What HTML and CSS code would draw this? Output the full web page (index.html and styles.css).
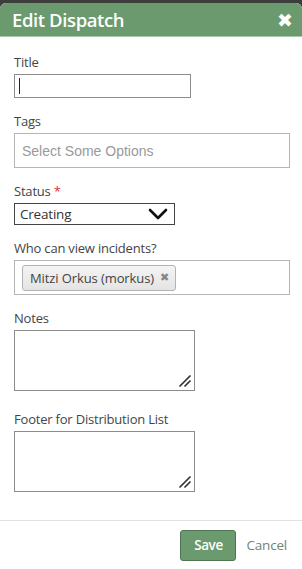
FILE: index.html
```html
<!DOCTYPE html>
<html lang="en">
  <head>
    <meta charset="UTF-8" />
    <meta name="viewport" content="width=device-width, initial-scale=1.0" />
    <title>Edit Dispatch</title>
    <link rel="stylesheet" href="styles.css">
  </head>
  <body>
    <div class="dialog">
      <header class="dialog-head">
        <span class="dialog-title">Edit Dispatch</span>
        <span class="close-btn">&#10006;</span>
      </header>
      <main class="dialog-body">
        <div class="field">
          <label>Title</label>
          <div class="text-input title-input"><span class="caret"></span></div>
        </div>

        <div class="field">
          <label>Tags</label>
          <div class="multi-box tags-box">
            <span class="placeholder">Select Some Options</span>
          </div>
        </div>

        <div class="field">
          <label>Status <span class="req">*</span></label>
          <div class="select-box">
            <span>Creating</span>
            <svg class="chevron" width="20" height="12" viewBox="0 0 20 12">
              <path d="M2 2 L10 10 L18 2" fill="none" stroke="#111" stroke-width="2.6" stroke-linecap="round" stroke-linejoin="round"/>
            </svg>
          </div>
        </div>

        <div class="field">
          <label>Who can view incidents?</label>
          <div class="multi-box viewers-box">
            <span class="chip">Mitzi Orkus (morkus) <span class="chip-x">&#10006;</span></span>
          </div>
        </div>

        <div class="field notes-field">
          <label>Notes</label>
          <div class="textarea">
            <svg class="grip" width="12" height="12" viewBox="0 0 12 12">
              <path d="M1 11 L11 1 M6 11 L11 6" stroke="#333" stroke-width="1.7" stroke-linecap="round"/>
            </svg>
          </div>
        </div>

        <div class="field footer-field">
          <label>Footer for Distribution List</label>
          <div class="textarea">
            <svg class="grip" width="12" height="12" viewBox="0 0 12 12">
              <path d="M1 11 L11 1 M6 11 L11 6" stroke="#333" stroke-width="1.7" stroke-linecap="round"/>
            </svg>
          </div>
        </div>
      </main>
      <footer class="dialog-foot">
        <button class="save-btn">Save</button>
        <span class="cancel-link">Cancel</span>
      </footer>
    </div>
  </body>
</html>
```

FILE: styles.css
```css
body {
  margin: 0;
  padding: 0;
  background-color: #3d3d3d;
  font-family: "Open Sans", Arial, sans-serif;
  color: #444;
}
.dialog {
  margin-top: 3px;
  height: 566px;
  background: #ffffff;
  border-radius: 6px 6px 0 0;
  display: flex;
  flex-direction: column;
  overflow: hidden;
}
.dialog-head {
  background: #6a9a6d;
  height: 33px;
  border-bottom: 1px solid #a9c9ab;
  display: flex;
  align-items: center;
  justify-content: space-between;
  padding: 0 9px 0 12px;
}
.dialog-title {
  color: #ffffff;
  font-size: 18.5px;
  font-weight: 600;
  letter-spacing: -0.4px;
}
.close-btn {
  color: #ffffff;
  font-size: 19px;
  font-family: "DejaVu Sans", sans-serif;
  font-weight: bold;
}
.dialog-body {
  flex: 1;
  padding: 16px 12px 0 14px;
}
.field {
  margin-bottom: 14px;
}
.field label {
  display: block;
  font-size: 13px;
  color: #444;
  margin-bottom: 3px;
  letter-spacing: -0.2px;
}
.req {
  color: #d33;
}
.text-input {
  box-sizing: border-box;
  width: 177px;
  height: 24px;
  border: 1px solid #8c8c8c;
  display: flex;
  align-items: center;
  padding-left: 4px;
}
.caret {
  width: 1px;
  height: 16px;
  background: #222;
}
.multi-box {
  box-sizing: border-box;
  width: 276px;
  border: 1px solid #b5b5b5;
  display: flex;
  align-items: center;
}
.tags-box {
  height: 35px;
  padding-left: 7px;
}
.placeholder {
  font-family: "Liberation Sans", Arial, sans-serif;
  font-size: 14px;
  color: #9a9a9a;
}
.select-box {
  box-sizing: border-box;
  width: 161px;
  height: 22px;
  border: 1px solid #444;
  display: flex;
  align-items: center;
  justify-content: space-between;
  padding: 0 6px 0 5px;
  font-size: 13.5px;
  color: #333;
  letter-spacing: -0.2px;
}
.viewers-box {
  height: 35px;
  padding-left: 7px;
}
.chip {
  box-sizing: border-box;
  height: 26px;
  display: flex;
  align-items: center;
  gap: 6px;
  padding: 0 6px 0 7px;
  border: 1px solid #b3b3b3;
  border-radius: 3px;
  background: linear-gradient(#f4f4f4, #e4e4e4);
  font-size: 13px;
  color: #444;
  letter-spacing: -0.1px;
}
.chip-x {
  font-family: "DejaVu Sans", sans-serif;
  font-size: 11px;
  font-weight: bold;
  color: #888;
}
.textarea {
  box-sizing: border-box;
  width: 181px;
  height: 61px;
  border: 1px solid #8c8c8c;
  position: relative;
}
.grip {
  position: absolute;
  right: 3px;
  bottom: 3px;
}
.notes-field {
  margin-bottom: 19px;
}
.dialog-foot {
  border-top: 1px solid #e2e2e2;
  height: 49px;
  display: flex;
  align-items: center;
  justify-content: flex-end;
  gap: 10px;
  padding-right: 15px;
  box-sizing: border-box;
}
.save-btn {
  width: 56px;
  height: 31px;
  background: #6a9a6d;
  border: 1px solid #4f7552;
  border-radius: 3px;
  color: #ffffff;
  font-family: "Open Sans", Arial, sans-serif;
  font-size: 13.5px;
  font-weight: 600;
  letter-spacing: -0.4px;
  cursor: pointer;
}
.cancel-link {
  font-size: 13.5px;
  color: #6f8474;
  letter-spacing: -0.2px;
}
```
